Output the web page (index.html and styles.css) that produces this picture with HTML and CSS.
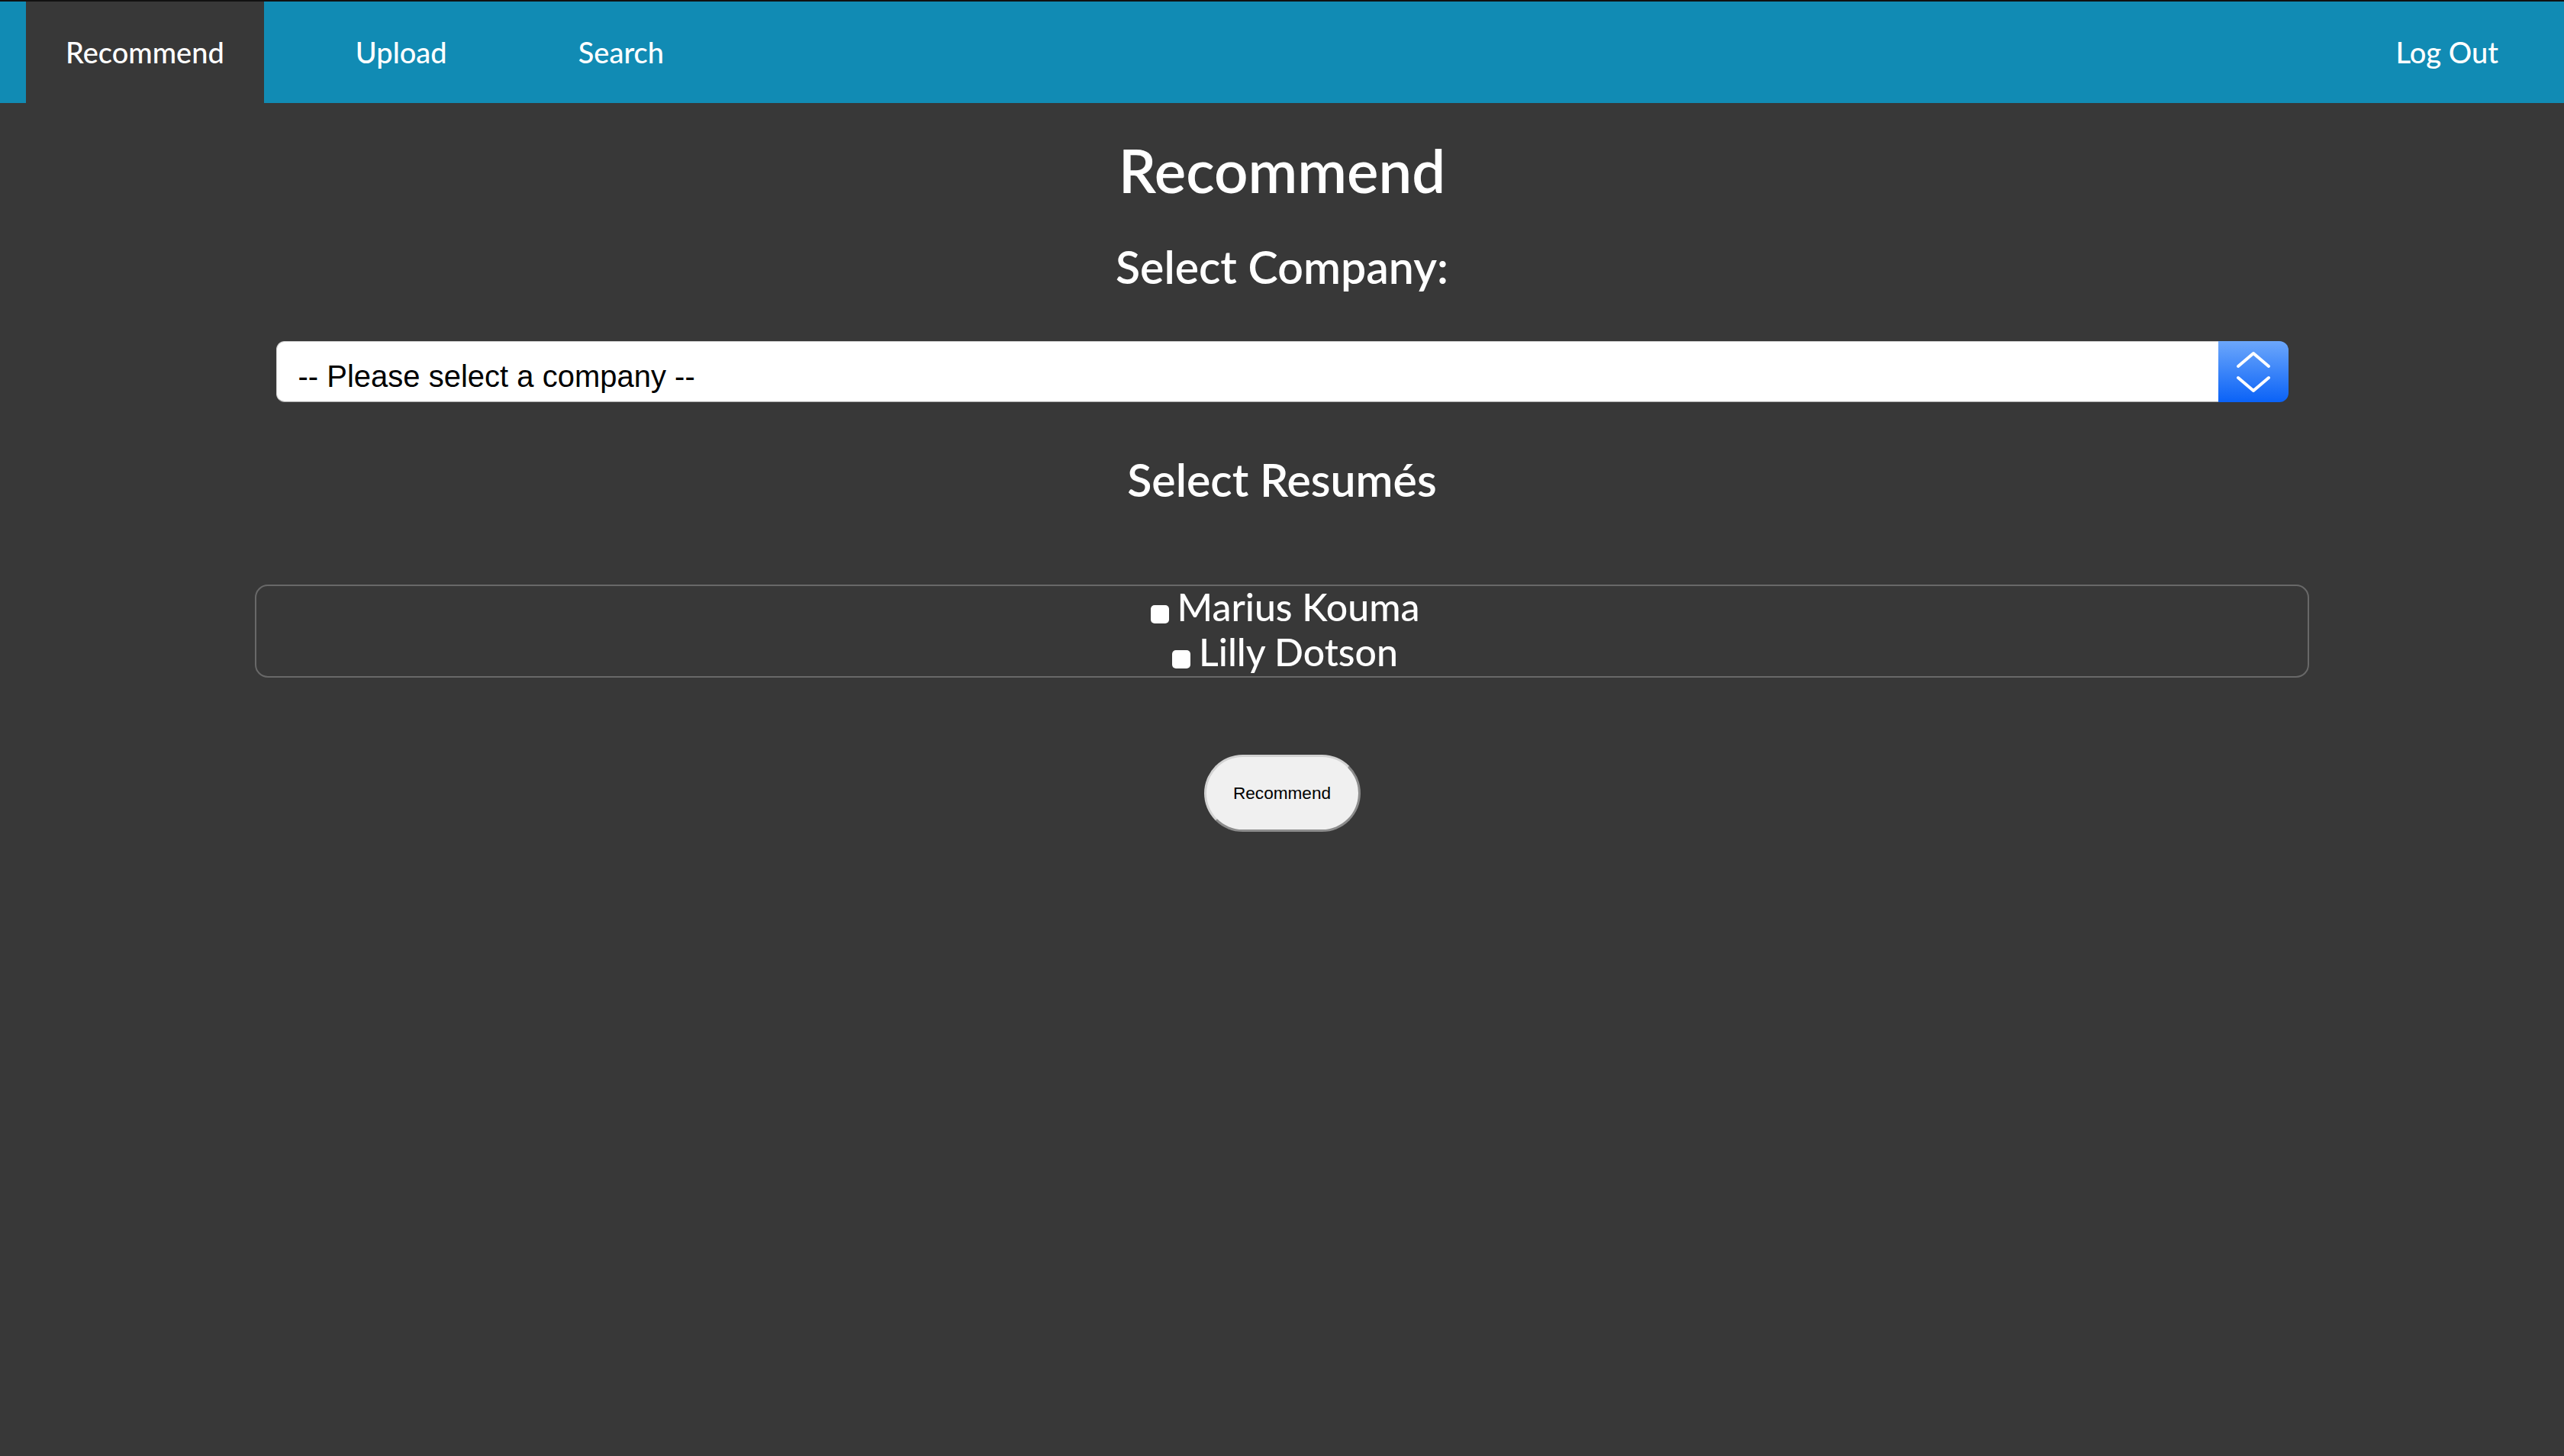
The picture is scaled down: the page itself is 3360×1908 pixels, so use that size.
FILE: index.html
```html
<!DOCTYPE html>
<html lang="en">
<head>
<meta charset="utf-8">
<title>Recommend</title>
<link rel="stylesheet" href="styles.css">
</head>
<body>
<nav class="topnav">
  <a class="tab active" href="#">Recommend</a>
  <a class="tab" href="#">Upload</a>
  <a class="tab" href="#">Search</a>
  <a class="tab logout" href="#">Log Out</a>
</nav>
<main class="page">
  <h1 class="title">Recommend</h1>
  <h2 class="section">Select Company:</h2>
  <div class="select-wrap">
    <select class="company">
      <option>-- Please select a company --</option>
    </select>
    <span class="select-arrows">
      <svg width="92" height="80" viewBox="0 0 92 80">
        <polyline points="26,33 46,16 66,33" fill="none" stroke="#fff" stroke-width="4" stroke-linecap="round" stroke-linejoin="round"/>
        <polyline points="26,48 46,65 66,48" fill="none" stroke="#fff" stroke-width="4" stroke-linecap="round" stroke-linejoin="round"/>
      </svg>
    </span>
  </div>
  <h2 class="section resumes-title">Select Resumés</h2>
  <div class="resume-list">
    <label class="resume"><input type="checkbox" class="check">Marius Kouma</label>
    <label class="resume"><input type="checkbox" class="check">Lilly Dotson</label>
  </div>
  <button class="recommend-btn" type="button">Recommend</button>
</main>
</body>
</html>
```

FILE: styles.css
```css
html {
  background: #383838;
}

html, body {
  margin: 0;
  padding: 0;
}

body {
  background: #383838;
  color: #fff;
  font-family: Lato, "Open Sans", sans-serif;
}

.topnav {
  display: flex;
  height: 133px;
  border-top: 2px solid #111;
  background: #118bb4;
}

.tab {
  display: flex;
  align-items: center;
  padding: 0 52px 2px;
  margin: 0 34px;
  color: #fff;
  font-size: 38px;
  font-weight: 500;
  text-decoration: none;
}

.tab.active {
  background: #383838;
}

.tab.logout {
  margin-left: auto;
}

.page {
  display: flex;
  flex-direction: column;
  align-items: center;
}

.title {
  margin: 43px 0 0;
  font-size: 78px;
  line-height: 90px;
  font-weight: 600;
}

.section {
  margin: 47px 0 0;
  font-size: 59px;
  line-height: 70px;
  font-weight: 600;
}

.select-wrap {
  display: flex;
  width: 2637px;
  height: 80px;
  margin-top: 62px;
  box-sizing: border-box;
}

.company {
  flex: 1;
  appearance: none;
  -webkit-appearance: none;
  height: 80px;
  box-sizing: border-box;
  margin: 0;
  padding: 12px 0 0 28px;
  border: 1px solid #d0d0d0;
  border-bottom-color: #a8a8a8;
  border-right: none;
  border-radius: 11px 0 0 11px;
  background: #fff;
  color: #000;
  font-family: "Liberation Sans", Arial, sans-serif;
  font-size: 40px;
  outline: none;
}

.select-arrows {
  display: block;
  width: 92px;
  height: 80px;
  border-radius: 0 12px 12px 0;
  background: linear-gradient(#6ca7fb, #0a62f7);
}

.select-arrows svg {
  display: block;
}

.resumes-title {
  margin-top: 67px;
}

.resume-list {
  display: flex;
  flex-direction: column;
  align-items: center;
  width: 80%;
  margin-top: 102px;
  border: 2px solid #686868;
  border-radius: 17px;
  font-size: 50px;
  line-height: 59px;
  font-weight: 500;
}

.resume {
  display: block;
  margin-left: 8px;
}

.resume:first-child {
  margin-top: -2px;
}

.resume:last-child {
  margin-bottom: 2px;
}

.check {
  appearance: none;
  -webkit-appearance: none;
  width: 24px;
  height: 24px;
  margin: 0 11px 0 0;
  background: #fff;
  border-radius: 5px;
  vertical-align: -3px;
}

.recommend-btn {
  margin-top: 101px;
  width: 205px;
  height: 101px;
  padding: 0;
  border: 3px solid;
  border-color: #d2d2d2 #8c8c8c #8c8c8c #d2d2d2;
  border-radius: 51px;
  background: #f0f0f0;
  color: #000;
  font-family: "Liberation Sans", Arial, sans-serif;
  font-size: 22.6px;
}
```
